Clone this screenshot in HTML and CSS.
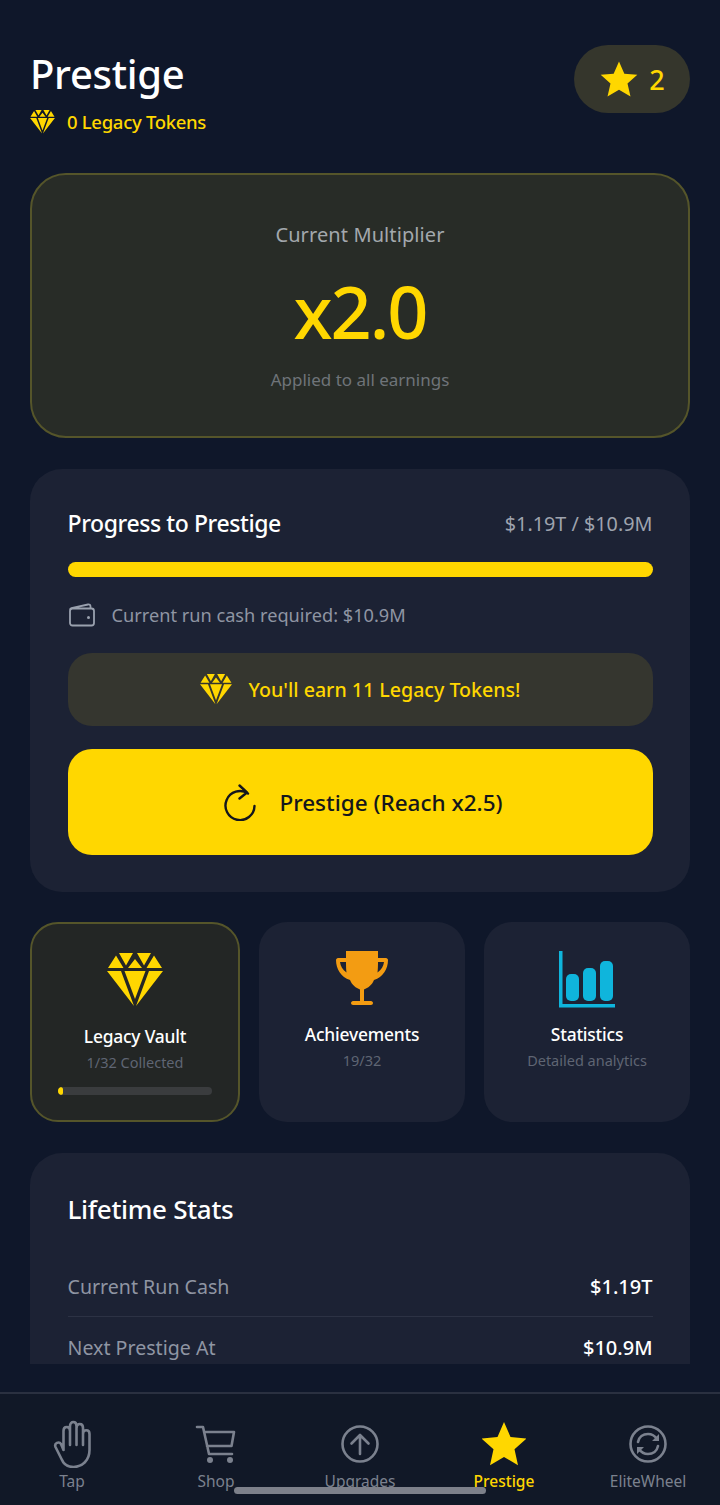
FILE: index.html
```html
<!DOCTYPE html>
<html lang="en">
<head>
<meta charset="utf-8">
<title>Prestige</title>
<link rel="stylesheet" href="styles.css">
</head>
<body>
<svg class="defs" width="0" height="0" aria-hidden="true">
  <symbol id="gem" viewBox="0 0 56 54">
    <path d="M12 0h14l-7 12.500zM30 0h14l-7 12.500zM9 2.500L16.500 15H1zM47 2.500L55 15H39.500zM28 6l7 9H21zM0 18h14l13 35zM17.500 18h21L28 46zM56 18H42L29 53z"/>
  </symbol>
</svg>
<div class="page">
  <main class="content">
    <header class="top">
      <div class="top-left">
        <h1 class="title">Prestige</h1>
        <div class="tokens"><svg class="gem-sm"><use href="#gem"/></svg><span>0 Legacy Tokens</span></div>
      </div>
      <div class="level">
        <svg class="level-star" viewBox="0 0 24 24"><path d="M12 1.500l3.200 7.300 7.800.7-5.900 5.200 1.800 7.800L12 18.400l-6.900 4.100 1.800-7.800L1 9.500l7.800-.7z"/></svg>
        <span>2</span>
      </div>
    </header>

    <section class="mult">
      <div class="mult-label">Current Multiplier</div>
      <div class="mult-value">x2.0</div>
      <div class="mult-sub">Applied to all earnings</div>
    </section>

    <section class="card progress">
      <div class="progress-head">
        <h2 class="progress-title">Progress to Prestige</h2>
        <span class="progress-nums">$1.19T / $10.9M</span>
      </div>
      <div class="bar"></div>
      <div class="req">
        <svg class="wallet" viewBox="0 0 28 24" fill="none"><path d="M2 6.500C2 6 2.500 5.500 3.500 5L20 1.500c1.500-.3 2.500.5 2.500 2V6M2 8c0-1.500 1-2.500 2.500-2.500h19C25 5.500 26 6.500 26 8v12c0 1.500-1 2.500-2.500 2.500h-19C3 22.500 2 21.500 2 20z" stroke="#9aa1ae" stroke-width="1.800"/><circle cx="20.500" cy="14.500" r="1.500" fill="#9aa1ae"/></svg>
        <span>Current run cash required: $10.9M</span>
      </div>
      <div class="earn"><svg class="gem-md"><use href="#gem"/></svg><span>You'll earn 11 Legacy Tokens!</span></div>
      <button class="cta">
        <svg class="cta-icon" viewBox="0 0 36 38" fill="none"><path d="M26 9.500A14.500 14.500 0 1 0 32.500 22M17.500 1.500l7.500 7-7.500 6" stroke="#14161c" stroke-width="2.400" stroke-linecap="round" stroke-linejoin="round" transform="translate(0 1)"/></svg>
        <span>Prestige (Reach x2.5)</span>
      </button>
    </section>

    <section class="tiles">
      <div class="tile tile-vault">
        <svg class="gem-lg"><use href="#gem"/></svg>
        <div class="tile-title">Legacy Vault</div>
        <div class="tile-sub">1/32 Collected</div>
        <div class="vault-track"><div class="vault-fill" style="width:3%"></div></div>
      </div>
      <div class="tile">
        <svg class="tile-icon" viewBox="-3 -1 58 58"><path fill="#f39c12" fill-rule="evenodd" d="M10 0H42V7H50c1 0 2 1 2 2 0 9-5 17-14 20-2 5-6 8-10 9.500V50h7c1 0 2 1 2 2s-1 2-2 2H17c-1 0-2-1-2-2s1-2 2-2h7V38.500C20 37 16 34 14 29 5 26 0 18 0 9c0-1 1-2 2-2h8zM4 11c.5 4 2.500 8 6.500 10.500-.4-3-.5-6.500-.5-10.500zM48 11h-6c0 4-.1 7.500-.5 10.500 4-2.500 6-6.500 6.500-10.500z"/></svg>
        <div class="tile-title">Achievements</div>
        <div class="tile-sub">19/32</div>
      </div>
      <div class="tile">
        <svg class="tile-icon" viewBox="0 -1 58 58"><path fill="#0fb5dc" d="M1 0h3.500v53H57v3.500H1z"/><rect x="8" y="23" width="13" height="27" rx="5" fill="#0fb5dc"/><rect x="25" y="17" width="13" height="33" rx="5" fill="#0fb5dc"/><rect x="42" y="10" width="13" height="40" rx="5" fill="#0fb5dc"/></svg>
        <div class="tile-title">Statistics</div>
        <div class="tile-sub">Detailed analytics</div>
      </div>
    </section>

    <section class="card stats">
      <h2 class="stats-title">Lifetime Stats</h2>
      <div class="stat"><span>Current Run Cash</span><b>$1.19T</b></div>
      <div class="stat"><span>Next Prestige At</span><b>$10.9M</b></div>
    </section>
  </main>

  <nav class="nav">
    <div class="nav-item">
      <svg class="nav-icon" viewBox="0 0 44 48" fill="none"><path d="M13.500 30V11c0-5.300 6.500-5.300 6.500 0M20 25V6c0-5.300 6.500-5.300 6.500 0V25M26.500 8c0-5.300 6.500-5.300 6.500 0V25M33 14c0-5 6.500-5 6.500 0V30c0 10-7 17-16 17-6 0-10-3-12-8L5.500 27c-1.500-4 3.500-6 5.500-3l2.500 6" stroke="#7b818e" stroke-width="2.600" stroke-linecap="round" stroke-linejoin="round"/></svg>
      <span>Tap</span>
    </div>
    <div class="nav-item">
      <svg class="nav-icon" viewBox="0 0 44 48" fill="none"><path d="M3 7h6l6 27h23M10 12h30l-2.500 14H13" stroke="#7b818e" stroke-width="2.600" stroke-linecap="round" stroke-linejoin="round"/><circle cx="16" cy="40" r="3" fill="#7b818e"/><circle cx="36" cy="40" r="3" fill="#7b818e"/></svg>
      <span>Shop</span>
    </div>
    <div class="nav-item">
      <svg class="nav-icon" viewBox="0 0 44 48" fill="none"><circle cx="22" cy="24" r="17.500" stroke="#7b818e" stroke-width="2.600"/><path d="M22 34V15M13.500 23.500L22 15l8.500 8.500" stroke="#7b818e" stroke-width="2.600" stroke-linecap="round" stroke-linejoin="round"/></svg>
      <span>Upgrades</span>
    </div>
    <div class="nav-item nav-active">
      <svg class="nav-icon" viewBox="0 0 44 48"><path fill="#ffd700" d="M22 2l6.500 15 16 1.500-12 10.700 3.500 16L22 37l-14 8.200 3.500-16-12-10.700 16-1.500z"/></svg>
      <span>Prestige</span>
    </div>
    <div class="nav-item">
      <svg class="nav-icon" viewBox="0 0 44 48" fill="none"><circle cx="22" cy="24" r="17.500" stroke="#7b818e" stroke-width="2.600"/><path d="M12 22c1-5 5-8 10-8 4 0 7 2 9 5M32 26c-1 5-5 8-10 8-4 0-7-2-9-5" stroke="#7b818e" stroke-width="2.600" stroke-linecap="round"/><path d="M33 14v7h-7zM11 34v-7h7z" fill="#7b818e"/></svg>
      <span>EliteWheel</span>
    </div>
  </nav>
  <div class="home-indicator"></div>
</div>
</body>
</html>
```

FILE: styles.css
```css
* { box-sizing: border-box; }
html, body { margin: 0; padding: 0; }
body {
  background: #0f172a;
  color: #fff;
  font-family: "Noto Sans", "Open Sans", sans-serif;
}
.defs { position: absolute; }
.page {
  position: relative;
  width: 720px;
  height: 1505px;
  display: flex;
  flex-direction: column;
  overflow: hidden;
}
.content {
  height: 1364px;
  overflow: hidden;
  padding: 45px 30px 0;
  flex: none;
}
.top {
  display: flex;
  justify-content: space-between;
  align-items: flex-start;
  height: 98px;
}
.title {
  margin: 0;
  font-size: 40px;
  line-height: 58px;
  font-weight: 500;
  letter-spacing: -0.3px;
}
.tokens {
  display: flex;
  align-items: center;
  gap: 12px;
  margin-top: 3px;
  color: #ffd700;
  font-size: 18.500px;
  line-height: 32px;
  font-weight: 500;
  letter-spacing: -0.3px;
}
.gem-sm { width: 25px; height: 24px; fill: #ffd700; }
.gem-md { width: 32px; height: 31px; fill: #ffd700; }
.gem-lg { width: 56px; height: 54px; fill: #ffd700; display: block; }
.level {
  display: flex;
  align-items: center;
  justify-content: center;
  gap: 10px;
  width: 116px;
  height: 68px;
  border-radius: 34px;
  background: #35362c;
  color: #ffd700;
  font-size: 27px;
  font-weight: 500;
}
.level-star { width: 40px; height: 40px; fill: #ffd700; }
.mult {
  height: 265px;
  margin-top: 30px;
  border: 2px solid #55552a;
  border-radius: 36px;
  background: #282c27;
  text-align: center;
  padding-top: 45px;
}
.mult-label { font-size: 20px; line-height: 30px; color: #a3a8ad; letter-spacing: .1px; }
.mult-value { font-size: 72px; line-height: 90px; margin-top: 16px; color: #ffd700; font-weight: 500; letter-spacing: -2px; }
.mult-sub { font-size: 17px; line-height: 26px; margin-top: 11px; color: #6f7479; }
.card { background: #1c2234; border-radius: 32px; }
.progress { height: 423px; margin-top: 31px; padding: 37px 37.500px; }
.progress-head { display: flex; justify-content: space-between; align-items: center; height: 34px; }
.progress-title { margin: 0; font-size: 23px; font-weight: 500; letter-spacing: -0.4px; }
.progress-nums { font-size: 19.800px; color: #9ea3ae; }
.bar { height: 15px; margin-top: 22px; border-radius: 8px; background: #ffd700; }
.req {
  display: flex;
  align-items: center;
  gap: 16px;
  height: 30px;
  margin-top: 23px;
  font-size: 18.200px;
  color: #8f95a3;
}
.wallet { width: 28px; height: 24px; }
.earn {
  display: flex;
  align-items: center;
  justify-content: center;
  gap: 17px;
  height: 73px;
  margin-top: 23px;
  border-radius: 24px;
  background: #35362f;
  color: #ffd700;
  font-size: 19.600px;
  font-weight: 500;
}
.cta {
  display: flex;
  align-items: center;
  justify-content: center;
  gap: 21px;
  width: 100%;
  height: 106px;
  margin-top: 23px;
  padding: 0 0 0 5px;
  border: 0;
  border-radius: 24px;
  background: #ffd700;
  color: #14161c;
  font: 500 22.500px "Noto Sans", "Open Sans", sans-serif;
}
.cta-icon { width: 36px; height: 38px; }
.tiles {
  display: grid;
  grid-template-columns: 210px 206px 206px;
  column-gap: 19px;
  height: 200px;
  margin-top: 30px;
}
.tile {
  display: flex;
  flex-direction: column;
  align-items: center;
  border-radius: 28px;
  background: #1c2234;
  padding-top: 28px;
}
.tile-vault {
  border: 2px solid #55552a;
  background: #232625;
  padding-top: 29px;
}
.tile-icon { width: 58px; height: 58px; display: block; }
.tile-title { margin-top: 13px; font-size: 17.400px; line-height: 26px; font-weight: 500; letter-spacing: -0.2px; }
.tile-vault .tile-title { margin-top: 16px; }
.tile-sub { font-size: 14.500px; line-height: 22px; margin-top: 2px; color: #5f6573; }
.vault-track { width: 154px; height: 8px; margin-top: 14px; border-radius: 4px; background: #3a3c3e; overflow: hidden; }
.vault-fill { height: 100%; background: #ffd700; border-radius: 4px; }
.stats { height: 300px; margin-top: 31px; padding: 35px 37.500px; }
.stats-title { margin: 0 0 26px; font-size: 26px; line-height: 42px; font-weight: 500; letter-spacing: -0.3px; }
.stat {
  display: flex;
  justify-content: space-between;
  align-items: center;
  height: 61px;
  font-size: 19.600px;
  color: #8f95a3;
  border-bottom: 1px solid #2c3244;
}
.stat b { color: #fff; font-weight: 500; font-size: 20px; }
.nav {
  flex: none;
  display: flex;
  justify-content: space-around;
  height: 113px;
  margin-top: 28px;
  border-top: 2px solid #2a3040;
  background: #111827;
  padding: 26px 0 0;
}
.nav-item {
  display: flex;
  flex-direction: column;
  align-items: center;
  width: 144px;
  font-size: 15.500px;
  line-height: 22px;
  color: #7b818e;
}
.nav-icon { width: 44px; height: 48px; display: block; margin-bottom: 2px; }
.nav-active { color: #ffd700; font-weight: 500; }
.home-indicator {
  position: absolute;
  left: 234px;
  bottom: 11px;
  width: 252px;
  height: 7px;
  border-radius: 4px;
  background: #7d808a;
}
```
